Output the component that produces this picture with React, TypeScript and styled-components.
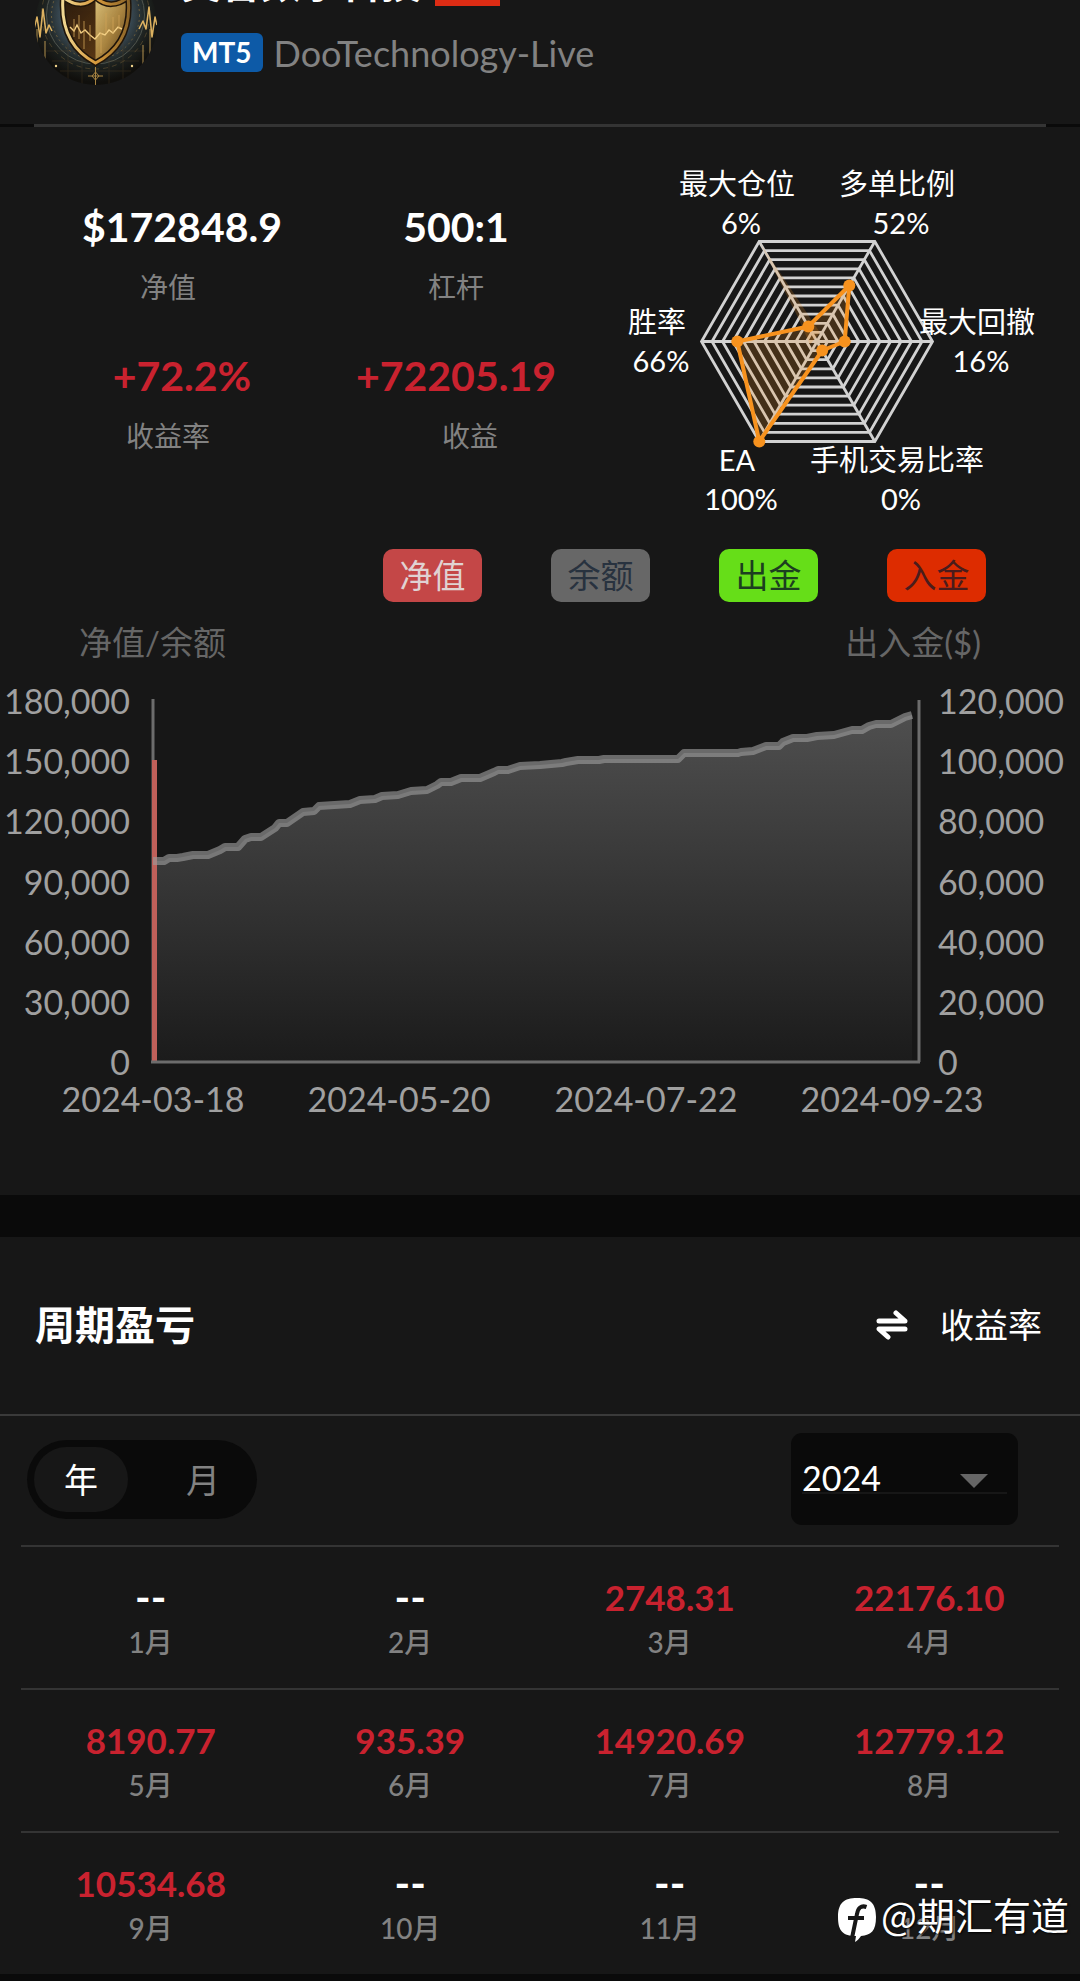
import React, { useState } from "react";
import styled, { createGlobalStyle } from "styled-components";

const color = {
  page: "#0a0a0a",
  panel: "#171717",
  line: "#3a3a3a",
  muted: "#828282",
  axis: "#a0a0a0",
  up: "#c9222f",
  orange: "#f7921e",
};

const fontStack = `Lato, "Noto Sans CJK SC", sans-serif`;

const GlobalStyle = createGlobalStyle`
  *, *::before, *::after { box-sizing: border-box; }
  body {
    margin: 0;
    background: ${color.page};
    color: #fff;
    font-family: ${fontStack};
    overflow-x: hidden;
  }
  h1, h2, p, dl, dd, ul { margin: 0; padding: 0; }
  button, select { font: inherit; color: inherit; border: 0; background: none; }
`;

const Page = styled.main`
  overflow: hidden;
  padding-bottom: 6px;
`;

/* ---------- account header ---------- */

const Header = styled.header`
  display: flex;
  align-items: flex-end;
  gap: 24px;
  margin-top: -48px;
  padding: 8px 34px 38px;
  background: ${color.panel};
`;

const Avatar = styled.svg`
  flex: none;
  width: 123px;
  height: 123px;
`;

const Account = styled.div`
  display: flex;
  flex-direction: column;
  gap: 27px;
  padding-bottom: 14px;
`;

const AccountRow = styled.div<{ $gap: number }>`
  display: flex;
  align-items: center;
  gap: ${(p) => p.$gap}px;
`;

const AccountName = styled.h1`
  font-size: 40px;
  line-height: 46px;
  font-weight: 700;
`;

const RedTag = styled.span`
  width: 65px;
  height: 46px;
  background: #dd2c14;
`;

const Platform = styled.span`
  padding: 0 11px;
  border-radius: 6px;
  background: #0d5aa7;
  font-size: 28px;
  line-height: 39px;
  font-weight: 700;
`;

const Server = styled.span`
  color: ${color.muted};
  font-size: 36px;
  line-height: 38px;
`;

const HeaderRule = styled.hr`
  height: 3px;
  margin: 0 34px;
  border: 0;
  background: #343434;
`;

/* ---------- overview ---------- */

const Panel = styled.section`
  position: relative;
  background: ${color.panel};
`;

const Overview = styled.div`
  display: grid;
  grid-template-columns: 5fr 4fr;
  padding-top: 23px;
`;

const Stats = styled.dl`
  display: grid;
  grid-template-columns: 1fr 1fr;
  align-content: start;
  row-gap: 45px;
  padding: 51px 0 0 24px;
`;

const Stat = styled.div`
  display: flex;
  flex-direction: column-reverse;
  gap: 16px;
  text-align: center;
`;

const StatValue = styled.dd<{ $up?: boolean; $indent?: number }>`
  padding-left: ${(p) => p.$indent ?? 0}px;
  color: ${(p) => (p.$up ? color.up : "#fff")};
  font-size: 41px;
  line-height: 52px;
  font-weight: 700;
`;

const StatLabel = styled.dt<{ $indent?: number }>`
  padding-left: ${(p) => p.$indent ?? 0}px;
  color: ${color.muted};
  font-size: 28px;
  line-height: 36px;
`;

const Drawing = styled.svg`
  display: block;
  width: 100%;
  height: auto;
  font-family: ${fontStack};
`;

const Legend = styled.div`
  display: flex;
  justify-content: flex-end;
  gap: 69px;
  padding: 19px 94px 0 0;
`;

const LegendButton = styled.button<{ $bg: string; $ink: string }>`
  width: 99px;
  padding: 0;
  border-radius: 10px;
  background: ${(p) => p.$bg};
  color: ${(p) => p.$ink};
  font-size: 33px;
  line-height: 53px;
`;

const ChartWrap = styled.div`
  padding: 18px 0 65px;
`;

/* ---------- period results ---------- */

const PeriodPanel = styled(Panel)`
  margin-top: 42px;
`;

const PeriodHead = styled.div`
  display: flex;
  align-items: center;
  justify-content: space-between;
  padding: 60px 38px 61px 35px;
  border-bottom: 2px solid ${color.line};
`;

const PeriodTitle = styled.h2`
  font-size: 40px;
  line-height: 56px;
  font-weight: 700;
`;

const SwapButton = styled.button`
  display: flex;
  align-items: center;
  gap: 32px;
  padding: 0;
  font-size: 34px;
  line-height: 56px;
`;

const Controls = styled.div`
  display: flex;
  align-items: center;
  justify-content: space-between;
  padding: 17px 62px 20px 27px;
`;

const Toggle = styled.div`
  display: flex;
  gap: 28px;
  padding: 7px;
  border-radius: 40px;
  background: ${color.page};
`;

const ToggleButton = styled.button<{ $active: boolean }>`
  width: 94px;
  padding: 0;
  border-radius: 33px;
  background: ${(p) => (p.$active ? color.panel : "transparent")};
  color: ${(p) => (p.$active ? "#fff" : color.muted)};
  font-size: 34px;
  line-height: 65px;
`;

const YearPicker = styled.label`
  display: grid;
  align-items: center;
  width: 227px;
  height: 92px;
  padding: 0 11px;
  border-radius: 11px;
  background: ${color.page};

  > * { grid-area: 1 / 1; }
`;

const YearSelect = styled.select`
  appearance: none;
  width: 100%;
  height: 30px;
  padding: 0;
  border-bottom: 2px solid ${color.panel};
  outline: 0;
  font-size: 34px;
  line-height: 28px;
`;

const Caret = styled.span`
  justify-self: end;
  margin: 3px 19px 0 0;
  border: solid transparent;
  border-width: 14px 14px 0;
  border-top-color: #666;
  pointer-events: none;
`;

const Months = styled.ul`
  display: grid;
  grid-template-columns: repeat(4, 1fr);
  margin: 0 21px;
  list-style: none;
`;

const Month = styled.li`
  display: flex;
  flex-direction: column;
  gap: 5px;
  padding: 28px 0;
  border-top: 2px solid #343434;
  text-align: center;
`;

const MonthValue = styled.span<{ $up: boolean }>`
  color: ${(p) => (p.$up ? color.up : "#fff")};
  font-size: ${(p) => (p.$up ? 35 : 42)}px;
  line-height: 44px;
  font-weight: 700;
`;

const MonthLabel = styled.span`
  color: ${color.muted};
  font-size: 28px;
  line-height: 36px;
  font-weight: 500;
`;

const Watermark = styled.div`
  position: absolute;
  right: 11px;
  bottom: 32px;
  display: flex;
  align-items: center;
  gap: 5px;
  font-family: "Noto Sans CJK SC", sans-serif;
  font-size: 38px;
  line-height: 56px;
  text-shadow: 1px 1px 2px #000;

  svg { margin-top: 12px; }
`;

/* ---------- data ---------- */

const months = ["--", "--", "2748.31", "22176.10", "8190.77", "935.39", "14920.69", "12779.12", "10534.68", "--", "--", "--"];

const legend = [
  { text: "净值", bg: "#c44747", ink: "#e0d2d2" },
  { text: "余额", bg: "#676767", ink: "#28323f" },
  { text: "出金", bg: "#66de18", ink: "#1c3f20" },
  { text: "入金", bg: "#dd2c00", ink: "#4a1c1c" },
];

/* Clockwise from the right-hand vertex. */
const radar = [
  { name: "最大回撤", pct: "16%", r: 0.24, x: 377, y: 173 },
  { name: "手机交易比率", pct: "0%", r: 0.09, x: 297, y: 311 },
  { name: "EA", pct: "100%", r: 1, x: 137, y: 311 },
  { name: "胜率", pct: "66%", r: 0.69, x: 57, y: 173 },
  { name: "最大仓位", pct: "6%", r: 0.15, x: 137, y: 35 },
  { name: "多单比例", pct: "52%", r: 0.56, x: 297, y: 35 },
];

const curve: [number, number][] = [
  [153, 241], [164, 241], [169, 238], [177, 238], [183, 237], [193, 235], [208, 235], [220, 230], [225, 227],
  [238, 227], [245, 219], [251, 217], [261, 217], [275, 208], [279, 203], [287, 203], [303, 192], [314, 191],
  [319, 186], [350, 184], [360, 180], [375, 179], [382, 176], [398, 175], [411, 171], [427, 170], [437, 165],
  [441, 162], [451, 162], [461, 158], [480, 158], [494, 152], [498, 150], [508, 150], [520, 146], [540, 145],
  [562, 143], [566, 142], [578, 140], [599, 140], [604, 139], [678, 139], [684, 133], [738, 133], [741, 132],
  [753, 131], [766, 126], [779, 126], [783, 122], [793, 118], [807, 118], [817, 116], [834, 115], [852, 110],
  [862, 110], [869, 106], [876, 104], [891, 104], [905, 97], [912, 95],
];

const leftTicks = ["180,000", "150,000", "120,000", "90,000", "60,000", "30,000", "0"];
const rightTicks = ["120,000", "100,000", "80,000", "60,000", "40,000", "20,000", "0"];
const dates = [
  { x: 153, text: "2024-03-18" },
  { x: 399, text: "2024-05-20" },
  { x: 646, text: "2024-07-22" },
  { x: 892, text: "2024-09-23" },
];

/* ---------- drawings ---------- */

function ShieldAvatar() {
  return (
    <Avatar viewBox="0 0 123 123" role="img" aria-label="头像">
      <defs>
        <clipPath id="disc"><circle cx="62" cy="61" r="61" /></clipPath>
        <radialGradient id="halo" cx="0.5" cy="0.42" r="0.55">
          <stop offset="0.5" stopColor="#3c4d58" />
          <stop offset="0.75" stopColor="#1f2422" />
          <stop offset="1" stopColor="#11100d" />
        </radialGradient>
        <linearGradient id="dark" x1="0" y1="0" x2="1" y2="1">
          <stop offset="0" stopColor="#2a1a0c" />
          <stop offset="1" stopColor="#6a4218" />
        </linearGradient>
        <linearGradient id="gold" x1="0" y1="0" x2="1" y2="1">
          <stop offset="0" stopColor="#d9bf78" />
          <stop offset="0.5" stopColor="#a98440" />
          <stop offset="1" stopColor="#4e3412" />
        </linearGradient>
        <linearGradient id="rim" x1="0" y1="0" x2="1" y2="0">
          <stop offset="0" stopColor="#f0d792" />
          <stop offset="0.5" stopColor="#d79a3c" />
          <stop offset="1" stopColor="#8c6528" />
        </linearGradient>
      </defs>
      <g clipPath="url(#disc)">
        <rect width="123" height="123" fill="url(#halo)" />
        <g fill="none" stroke="#9b7c43" strokeWidth="1" opacity="0.6">
          <circle cx="61.5" cy="52" r="44" strokeDasharray="2 3" />
          <circle cx="61.5" cy="52" r="49" stroke="#6f7468" />
          <circle cx="61.5" cy="52" r="54" strokeDasharray="5 4" opacity="0.6" />
        </g>
        <path d="M12 88h99M18 98h87M26 108h71M34 80v40M48 94v28M75 94v28M89 80v40" stroke="#5c4524" opacity="0.3" />
        <g fill="none" stroke="#dcb160" strokeWidth="1.6" strokeLinejoin="round">
          <path d="M0 66l3-12 3 20 3-28 3 24 3-8 3 6" />
          <path d="M105 66l4-8 3 8 3-22 3 30 3-20 2 8" />
          <path d="M3 66v20M116 66v30M109 82v28M11 78v22" strokeWidth="1" opacity="0.8" />
        </g>
        <g fill="#f2d48c">
          <circle cx="3" cy="86" r="1.5" /><circle cx="116" cy="96" r="1.5" />
          <circle cx="109" cy="109" r="1.4" /><circle cx="11" cy="100" r="1.2" />
          <circle cx="22" cy="103" r="1.2" /><circle cx="98" cy="103" r="1.2" />
        </g>
        <path d="M61.5 34C52 44 40 43 29 34c-2 26 4 51 32.500 66C90 85 97 60 94 34 84 43 71 44 61.500 34z" fill="url(#dark)" />
        <path d="M61.5 34v66C90 85 97 60 94 34 84 43 71 44 61.500 34z" fill="url(#gold)" />
        <path d="M61.5 34C52 44 40 43 29 34c-2 26 4 51 32.500 66C90 85 97 60 94 34 84 43 71 44 61.500 34z" fill="none" stroke="#20150a" strokeWidth="6" />
        <path d="M61.5 34C52 44 40 43 29 34c-2 26 4 51 32.500 66C90 85 97 60 94 34 84 43 71 44 61.500 34z" fill="none" stroke="url(#rim)" strokeWidth="3" />
        <path d="M36 64l4 4 3-6 4 8 4-3 5 5 5 4 5-6 5 2 4-5 4 3 5-6 4 2" fill="none" stroke="#f3cf84" strokeWidth="1.4" />
        <path d="M40 56v18M45 52v24M50 58v28M72 50v20M67 70v20M79 54v16M85 52v14M56 62v16" stroke="#cfa256" strokeWidth="1" opacity="0.8" />
        <path d="M61.5 104v18M54 113h15M58 113l3.500-4 3.500 4-3.500 4z" fill="none" stroke="#a88442" strokeWidth="1" />
      </g>
    </Avatar>
  );
}

function Radar() {
  const cx = 217;
  const cy = 191.5;
  const R = 115.5;
  const at = (i: number, k: number) => {
    const a = (i * Math.PI) / 3;
    return `${(cx + R * k * Math.cos(a)).toFixed(1)},${(cy + R * k * Math.sin(a)).toFixed(1)}`;
  };
  const ring = (k: number) => radar.map((_, i) => at(i, k)).join(" ");
  const shape = radar.map((d, i) => at(i, d.r)).join(" ");
  return (
    <Drawing viewBox="0 0 480 380" role="img" aria-label="交易能力">
      <g fill="none" stroke="#d2d2d2" strokeWidth="2.8">
        {Array.from({ length: 11 }, (_, n) => (
          <polygon key={n} points={ring((n + 1) / 11)} />
        ))}
        {radar.map((d, i) => (
          <polyline key={d.name} points={`${cx},${cy} ${at(i, 1)}`} />
        ))}
      </g>
      <polygon points={`${at(4, 1)} ${cx + 3},${cy - 9} ${cx - 7},${cy + 3} ${cx - 19},${cy - 24}`} fill={color.orange} opacity="0.2" />
      <polygon points={shape} fill={color.orange} fillOpacity="0.2" stroke={color.orange} strokeWidth="4" strokeLinejoin="round" />
      {radar.map((d, i) => {
        const [x, y] = at(i, d.r).split(",");
        return <circle key={d.name} cx={x} cy={y} r="6" fill={color.orange} />;
      })}
      <g fill="#fff" fontSize="29" textAnchor="middle">
        {radar.map((d) => (
          <React.Fragment key={d.name}>
            <text x={d.x} y={d.y + 10}>{d.name}</text>
            <text x={d.x + 4} y={d.y + 49}>{d.pct}</text>
          </React.Fragment>
        ))}
      </g>
    </Drawing>
  );
}

function EquityChart() {
  const line = curve.map(([x, y]) => `${x},${y}`).join(" ");
  return (
    <Drawing viewBox="0 0 1080 510" role="img" aria-label="净值余额走势">
      <defs>
        <linearGradient id="area" gradientUnits="userSpaceOnUse" x1="0" y1="94" x2="0" y2="442">
          <stop offset="0" stopColor="#4f4f4f" />
          <stop offset="1" stopColor="#1b1b1b" />
        </linearGradient>
      </defs>
      <g fill="#666" fontSize="33">
        <text x="79" y="35">净值/余额</text>
        <text x="981" y="35" textAnchor="end">出入金($)</text>
      </g>
      <path d="M153 79V442M919 80V442" stroke="#6c6c6c" strokeWidth="3" />
      <polygon points={`153,442 ${line} 912,442`} fill="url(#area)" />
      <rect x="152" y="140" width="5" height="302" fill="#c0605a" />
      <polyline points={line} fill="none" stroke="#9c9c9c" strokeOpacity="0.63" strokeWidth="8" strokeLinejoin="round" />
      <path d="M151 442H920" stroke="#6c6c6c" strokeWidth="3" />
      <g fill={color.axis} fontSize="34">
        {leftTicks.map((t, i) => (
          <text key={t} x="130" y={94 + Math.round(i * 60.2)} textAnchor="end">{t}</text>
        ))}
        {rightTicks.map((t, i) => (
          <text key={t} x="938" y={94 + Math.round(i * 60.2)}>{t}</text>
        ))}
        {dates.map((d) => (
          <text key={d.text} x={d.x} y="492" textAnchor="middle">{d.text}</text>
        ))}
      </g>
    </Drawing>
  );
}

function SwapIcon() {
  return (
    <svg width="32" height="30" viewBox="0 0 32 30" fill="none" stroke="#fff" strokeWidth="5" strokeLinecap="round" strokeLinejoin="round" aria-hidden="true">
      <path d="M3 11H29L20 3" />
      <path d="M29 19H3L12 27" />
    </svg>
  );
}

function WatermarkLogo() {
  return (
    <svg width="38" height="44" viewBox="0 0 38 44" aria-hidden="true">
      <path d="M19 0C32 0 38 5 38 19S33 37 23 38C21 41 19 43 17 44L18 38C5 38 0 33 0 19S6 0 19 0z" fill="#fff" />
      <path d="M28.500 9C23 7 20 10 19 16L14 40M10 20H26" fill="none" stroke="#171717" strokeWidth="4" />
    </svg>
  );
}

/* ---------- page ---------- */

export default function App() {
  const [unit, setUnit] = useState("年");
  return (
    <>
      <GlobalStyle />
      <Page>
        <Header>
          <ShieldAvatar />
          <Account>
            <AccountRow $gap={14}>
              <AccountName>英智数字科技</AccountName>
              <RedTag />
            </AccountRow>
            <AccountRow $gap={11}>
              <Platform>MT5</Platform>
              <Server>DooTechnology-Live</Server>
            </AccountRow>
          </Account>
        </Header>
        <HeaderRule />

        <Panel>
          <Overview>
            <Stats>
              <Stat>
                <StatLabel>净值</StatLabel>
                <StatValue $indent={28}>$172848.9</StatValue>
              </Stat>
              <Stat>
                <StatLabel>杠杆</StatLabel>
                <StatValue>500:1</StatValue>
              </Stat>
              <Stat>
                <StatLabel>收益率</StatLabel>
                <StatValue $up $indent={28}>+72.2%</StatValue>
              </Stat>
              <Stat>
                <StatLabel $indent={28}>收益</StatLabel>
                <StatValue $up>+72205.19</StatValue>
              </Stat>
            </Stats>
            <Radar />
          </Overview>
          <Legend>
            {legend.map((l) => (
              <LegendButton key={l.text} type="button" $bg={l.bg} $ink={l.ink}>{l.text}</LegendButton>
            ))}
          </Legend>
          <ChartWrap>
            <EquityChart />
          </ChartWrap>
        </Panel>

        <PeriodPanel>
          <PeriodHead>
            <PeriodTitle>周期盈亏</PeriodTitle>
            <SwapButton type="button">
              <SwapIcon />
              收益率
            </SwapButton>
          </PeriodHead>
          <Controls>
            <Toggle>
              {["年", "月"].map((u) => (
                <ToggleButton key={u} type="button" $active={u === unit} onClick={() => setUnit(u)}>{u}</ToggleButton>
              ))}
            </Toggle>
            <YearPicker>
              <YearSelect aria-label="年份" defaultValue="2024">
                <option value="2024">2024</option>
              </YearSelect>
              <Caret />
            </YearPicker>
          </Controls>
          <Months>
            {months.map((value, i) => (
              <Month key={i}>
                <MonthValue $up={value !== "--"}>{value}</MonthValue>
                <MonthLabel>{i + 1}月</MonthLabel>
              </Month>
            ))}
          </Months>
          <Watermark>
            <WatermarkLogo />
            @期汇有道
          </Watermark>
        </PeriodPanel>
      </Page>
    </>
  );
}
